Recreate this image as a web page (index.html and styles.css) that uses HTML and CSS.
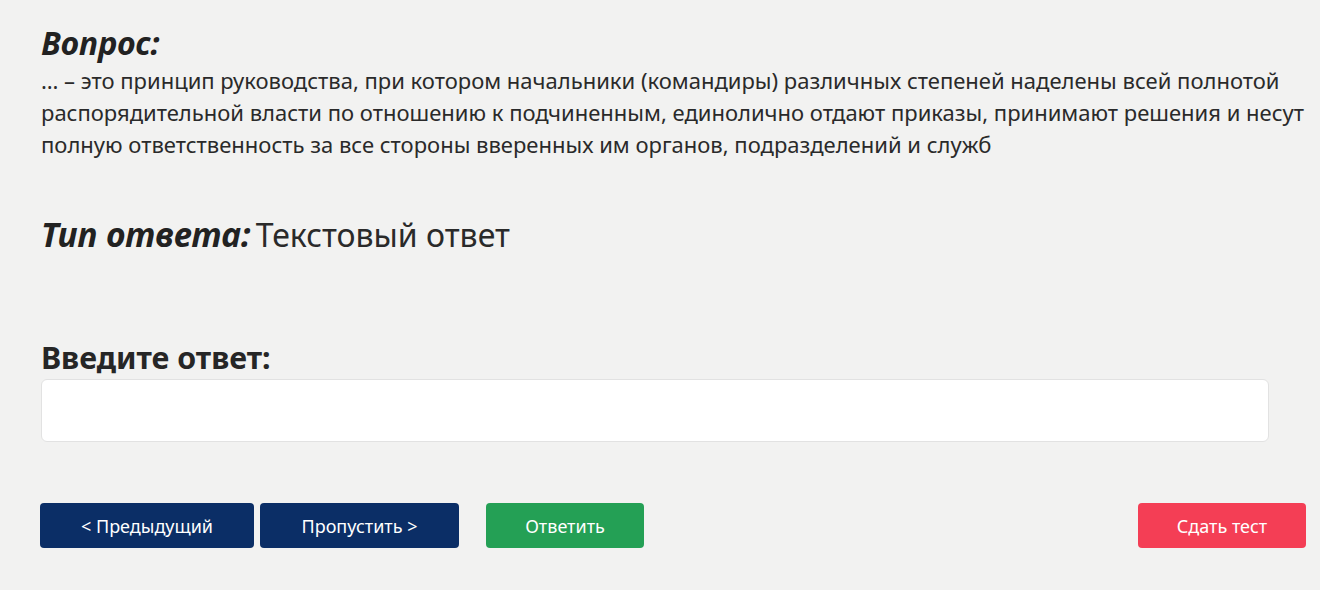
FILE: index.html
```html
<!DOCTYPE html>
<html lang="ru">
<head>
<meta charset="utf-8">
<link rel="stylesheet" href="styles.css">
</head>
<body>
<main class="page">
  <section class="question">
    <h2 class="label">Вопрос:</h2>
    <p class="qtext">… – это принцип руководства, при котором начальники (командиры) различных степеней наделены всей полнотой<br>распорядительной власти по отношению к подчиненным, единолично отдают приказы, принимают решения и несут<br>полную ответственность за все стороны вверенных им органов, подразделений и служб</p>
  </section>
  <section class="type">
    <span class="type-label">Тип ответа:</span><span class="type-value">Текстовый ответ</span>
  </section>
  <section class="answer">
    <h3 class="answer-label">Введите ответ:</h3>
    <input class="answer-input" type="text">
  </section>
  <div class="actions">
    <button class="btn btn-nav btn-prev">&lt; Предыдущий</button>
    <button class="btn btn-nav btn-skip">Пропустить &gt;</button>
    <button class="btn btn-answer">Ответить</button>
    <button class="btn btn-finish">Сдать тест</button>
  </div>
</main>
</body>
</html>
```
FILE: styles.css
```css
html, body {
  margin: 0;
  padding: 0;
  background: #f2f2f1;
}
body {
  font-family: "Noto Sans", "Open Sans", sans-serif;
  color: #2a2a2a;
}
.page {
  padding: 22px 14px 0 41px;
}
.label {
  margin: 0;
  font-size: 32px;
  font-weight: 700;
  font-style: italic;
  line-height: 42px;
  color: #222;
}
.qtext {
  margin: 0;
  font-size: 22px;
  line-height: 32px;
  white-space: nowrap;
}
.type {
  margin-top: 53px;
  font-size: 33.6px;
  line-height: 42px;
  height: 42px;
}
.type-label {
  font-weight: 700;
  font-style: italic;
  color: #222;
}
.type-value {
  margin-left: 5px;
  font-size: 32px;
}
.answer {
  margin-top: 84px;
}
.answer-label {
  margin: 0 0 3px 0;
  font-size: 30.4px;
  font-weight: 700;
  line-height: 37px;
  color: #262626;
}
.answer-input {
  display: block;
  box-sizing: border-box;
  width: 1228px;
  height: 63px;
  margin: 0;
  border: 1px solid #e2e2e2;
  border-radius: 6px;
  background: #fff;
}
.actions {
  margin-top: 61px;
  display: flex;
  align-items: center;
}
.btn {
  height: 45px;
  border: none;
  border-radius: 4px;
  color: #fff;
  font-family: "Noto Sans", "Open Sans", sans-serif;
  font-size: 18px;
  padding: 0;
}
.btn-nav {
  background: #0b2e66;
}
.btn-prev {
  width: 214px;
  margin-left: -1px;
}
.btn-skip {
  width: 199px;
  margin-left: 6px;
}
.btn-answer {
  width: 158px;
  margin-left: 27px;
  background: #24a055;
}
.btn-finish {
  width: 168px;
  margin-left: auto;
  background: #f43e55;
}
```
